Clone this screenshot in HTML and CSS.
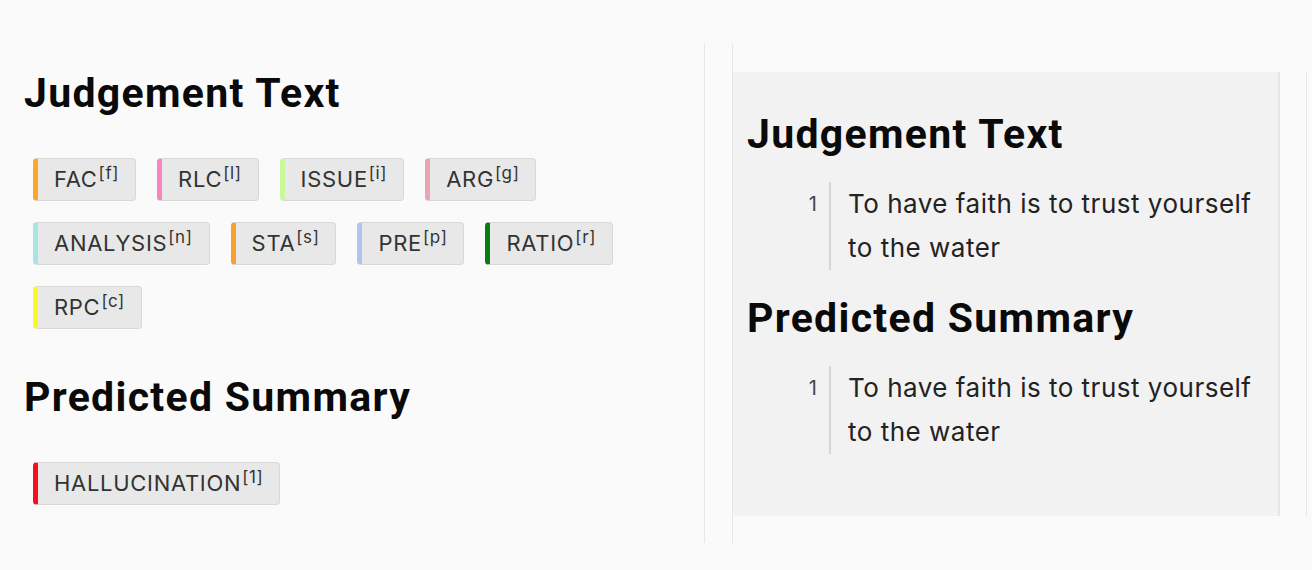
FILE: index.html
```html
<!DOCTYPE html>
<html lang="en">
<head>
<meta charset="utf-8">
<title>Judgement</title>
<link rel="stylesheet" href="styles.css">
</head>
<body>
<div class="page">
  <section class="left">
    <h2 class="heading">Judgement Text</h2>
    <div class="chips">
      <span class="chip c-fac">FAC<sup>[f]</sup></span>
      <span class="chip c-rlc">RLC<sup>[l]</sup></span>
      <span class="chip c-issue">ISSUE<sup>[i]</sup></span>
      <span class="chip c-arg">ARG<sup>[g]</sup></span>
      <span class="chip c-analysis">ANALYSIS<sup>[n]</sup></span>
      <span class="chip c-sta">STA<sup>[s]</sup></span>
      <span class="chip c-pre">PRE<sup>[p]</sup></span>
      <span class="chip c-ratio">RATIO<sup>[r]</sup></span>
      <span class="chip c-rpc">RPC<sup>[c]</sup></span>
    </div>
    <h2 class="heading second">Predicted Summary</h2>
    <div class="chips">
      <span class="chip c-hall">HALLUCINATION<sup>[1]</sup></span>
    </div>
  </section>
  <div class="divider"></div>
  <section class="right">
    <div class="panel">
      <h2 class="heading">Judgement Text</h2>
      <div class="line">
        <span class="num">1</span>
        <span class="text">To have faith is to trust yourself to the water</span>
      </div>
      <h2 class="heading second">Predicted Summary</h2>
      <div class="line">
        <span class="num">1</span>
        <span class="text">To have faith is to trust yourself to the water</span>
      </div>
    </div>
    <div class="scroll"></div>
  </section>
</div>
</body>
</html>
```

FILE: styles.css
```css
html, body {
  margin: 0;
  padding: 0;
  background: #fafafa;
}
body {
  font-family: Inter, "Noto Sans", sans-serif;
  color: #222;
}
.page {
  display: flex;
  align-items: flex-start;
  width: 1312px;
  height: 570px;
}
.left {
  width: 680px;
  padding-left: 24px;
  padding-top: 65px;
}
.heading {
  margin: 0;
  font-family: Roboto, "Liberation Sans", sans-serif;
  font-weight: 700;
  font-size: 41px;
  line-height: 56px;
  letter-spacing: 1.3px;
  color: #0a0a0a;
}
.left .chips {
  display: flex;
  flex-wrap: wrap;
  gap: 21px;
  padding-left: 9px;
  margin-top: 37px;
}
.left .heading.second {
  margin-top: 40px;
}
.chip {
  display: block;
  box-sizing: border-box;
  height: 43px;
  line-height: 41px;
  padding: 0 16px 0 16px;
  border: 1px solid #d8d8d8;
  border-left: 5px solid #999;
  border-radius: 4px;
  background: #e8e8e8;
  font-size: 22px;
  letter-spacing: 0.7px;
  color: #333;
  white-space: nowrap;
}
.chip sup {
  font-size: 17px;
  line-height: 0;
  vertical-align: 8px;
  letter-spacing: 0.6px;
  margin-left: 1px;
}
.c-fac { border-left-color: #fba72a; }
.c-rlc { border-left-color: #f885c1; }
.c-issue { border-left-color: #c9f79b; }
.c-arg { border-left-color: #e8a6b2; }
.c-analysis { border-left-color: #a7e5e2; }
.c-sta { border-left-color: #f8a02f; }
.c-pre { border-left-color: #b7c3ef; }
.c-ratio { border-left-color: #0a7d12; }
.c-rpc { border-left-color: #f8f82b; }
.c-hall { border-left-color: #f5101f; }

.divider {
  width: 1px;
  height: 499px;
  margin-top: 44px;
  background: #e6e6e6;
}
.right {
  display: flex;
  align-items: flex-start;
  margin-left: 27px;
  margin-top: 44px;
  height: 499px;
  border-left: 1px solid #e6e6e6;
  padding-top: 28px;
  box-sizing: border-box;
}
.panel {
  width: 547px;
  height: 444px;
  box-sizing: border-box;
  background: #f2f2f2;
  border-right: 2px solid #e6e6e6;
  border-radius: 0 0 0 4px;
  padding: 34px 0 0 14px;
}
.panel .heading.second {
  margin-top: 20px;
}
.line {
  display: flex;
  margin-top: 20px;
  margin-left: 50px;
}
.num {
  width: 20px;
  padding-right: 12px;
  text-align: right;
  font-size: 20px;
  line-height: 44px;
  color: #444;
  border-right: 2px solid #d6d6d6;
}
.text {
  width: 410px;
  padding-left: 17px;
  font-size: 26px;
  letter-spacing: 0.5px;
  line-height: 44px;
  color: #222;
}
.scroll {
  width: 1px;
  height: 444px;
  margin-left: 26px;
  background: #e6e6e6;
}
```
